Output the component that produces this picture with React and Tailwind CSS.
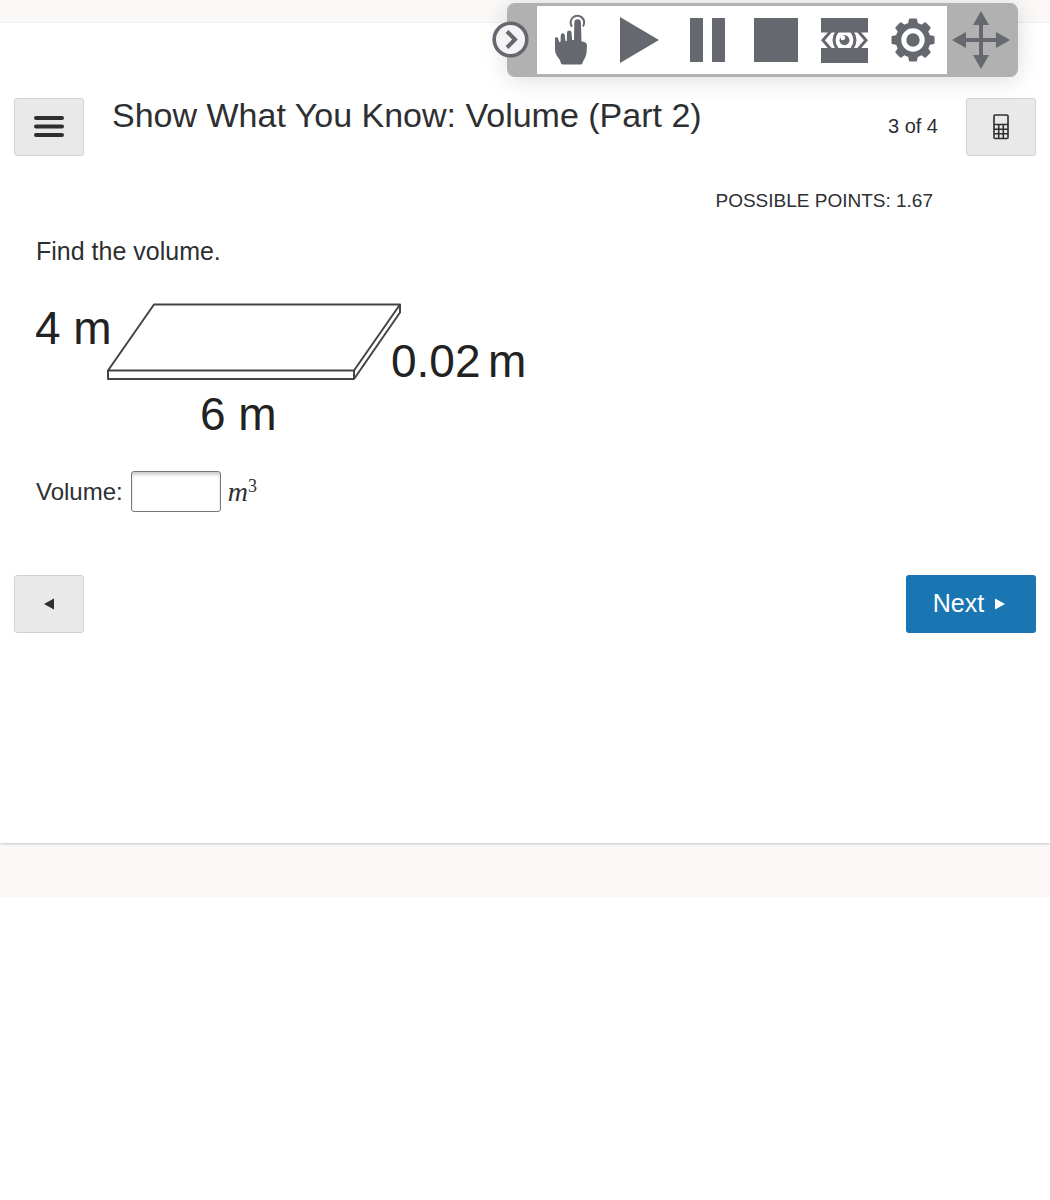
import { useState } from "react";

const grayBtn =
  "flex h-[58px] w-[70px] shrink-0 items-center justify-center rounded-[3px] border border-[#d2d2d2] bg-[#e9e9e9] text-[#2d2f31]";

const GEAR_ANGLES = [0, 45, 90, 135, 180, 225, 270, 315];

const HandIcon = () => (
  <svg width="34" height="52" viewBox="0 0 34 52" fill="currentColor">
    <path d="M6.5 48 C6 44 1 42 1 35 L1 24.5 Q1 23 2.4 23 Q3.8 23 4.3 25 L5.2 28 L6.5 28 L6.8 21 Q6.9 19.3 8.8 19.3 Q10.6 19.3 10.8 21 L11.4 27 L12.8 27 L13 18.5 Q13.1 16.5 15.3 16.5 Q17.3 16.5 17.5 18.5 L18.1 26 L20 26 L20.3 8.5 Q20.4 5.3 23.6 5.3 Q26.8 5.3 26.9 8.5 L27.5 27.5 Q32.5 27.5 33 31.5 L32.6 38 C32 44 29.5 45.5 28.5 49 Q28.2 50.5 26.5 50.5 L8.7 50.5 Q7 50.5 6.5 48 Z" />
    <path
      d="M18 12.7 A6.8 6.8 0 1 1 29 12.4"
      fill="none"
      stroke="currentColor"
      strokeWidth="2"
    />
  </svg>
);

const PlayIcon = () => (
  <svg width="40" height="48" viewBox="0 0 40 48" fill="currentColor">
    <path d="M1 1 L40 24 L1 47 Z" />
  </svg>
);

const PauseIcon = () => (
  <svg width="36" height="44" viewBox="0 0 36 44" fill="currentColor">
    <rect x="0" y="0" width="13" height="44" />
    <rect x="22" y="0" width="13" height="44" />
  </svg>
);

const StopIcon = () => (
  <svg width="44" height="44" viewBox="0 0 44 44" fill="currentColor">
    <rect width="44" height="44" />
  </svg>
);

const EyeIcon = () => (
  <svg width="47" height="45" viewBox="0 0 47 45" fill="currentColor">
    <rect width="47" height="14.5" />
    <rect y="30" width="47" height="15" />
    <path
      d="M10 13 L2 22.2 L10 31.4 M37 13 L45 22.2 L37 31.4"
      fill="none"
      stroke="currentColor"
      strokeWidth="3"
    />
    <path
      d="M16.5 13 Q9.5 22.2 16.5 31.4 M30.5 13 Q37.5 22.2 30.5 31.4"
      fill="none"
      stroke="currentColor"
      strokeWidth="3"
    />
    <circle cx="23.5" cy="22.2" r="5" />
    <circle cx="21.8" cy="19.8" r="2.4" fill="white" />
  </svg>
);

const GearIcon = () => (
  <svg width="44" height="44" viewBox="-22 -22 44 44" fill="currentColor">
    {GEAR_ANGLES.map((a) => (
      <path
        key={a}
        d="M-5 -16 L-4 -21 Q-3.8 -21.5 -3 -21.5 L3 -21.5 Q3.8 -21.5 4 -21 L5 -16 Z"
        transform={`rotate(${a})`}
      />
    ))}
    <circle r="17.5" />
    <circle r="9.2" stroke="white" strokeWidth="5" />
  </svg>
);

const MoveIcon = () => (
  <svg width="58" height="58" viewBox="-29 -29 58 58" fill="currentColor">
    <path d="M0 -29 L8 -15 L2 -15 L2 -2 L15 -2 L15 -8 L29 0 L15 8 L15 2 L2 2 L2 15 L8 15 L0 29 L-8 15 L-2 15 L-2 2 L-15 2 L-15 8 L-29 0 L-15 -8 L-15 -2 L-2 -2 L-2 -15 L-8 -15 Z" />
  </svg>
);

const tools = [
  { label: "Point to read", Icon: HandIcon },
  { label: "Play", Icon: PlayIcon },
  { label: "Pause", Icon: PauseIcon },
  { label: "Stop", Icon: StopIcon },
  { label: "Screen mask", Icon: EyeIcon },
  { label: "Settings", Icon: GearIcon },
];

const ReaderToolbar = () => (
  <div className="absolute top-[3px] right-8 z-10 flex h-[74px] rounded-lg border-[3px] border-[#b1b1b1] bg-[#b1b1b1] text-[#65686f] shadow-[0_2px_24px_rgba(0,0,0,0.14)]">
    <button aria-label="Collapse toolbar" className="relative w-[27px]">
      <svg
        className="absolute top-[15px] -left-[18px]"
        width="37"
        height="37"
        viewBox="0 0 37 37"
        fill="none"
        stroke="currentColor"
      >
        <circle cx="18.5" cy="18.5" r="16.3" fill="#f4f4f4" strokeWidth="3.6" />
        <path d="M15 10.5 L23 18.5 L15 26.5" strokeWidth="4" />
      </svg>
    </button>
    <div className="flex w-[410px] bg-white">
      {tools.map(({ label, Icon }) => (
        <button
          key={label}
          aria-label={label}
          className="flex flex-1 items-center justify-center"
        >
          <Icon />
        </button>
      ))}
    </div>
    <button
      aria-label="Move toolbar"
      className="flex w-[68px] cursor-move items-center justify-center"
    >
      <MoveIcon />
    </button>
  </div>
);

const PrismFigure = () => (
  <svg
    className="mt-6 block max-w-full"
    width="500"
    height="150"
    viewBox="36 290 500 150"
    role="img"
    aria-label="Rectangular prism, 6 m by 4 m by 0.02 m"
  >
    <g fill="none" stroke="#444" strokeWidth="2" strokeLinejoin="round">
      <path d="M154 304.5 H400 L354 370.5 H108 Z" />
      <path d="M108 370.5 V379 H354 V370.5 M354 379 L400 312.5 V304.5" />
    </g>
    <g
      fill="#222"
      fontSize="46"
      fontFamily='"Liberation Sans", Arial, sans-serif'
    >
      <text x="35" y="344">
        4 m
      </text>
      <text x="391" y="377">
        0.02
      </text>
      <text x="488" y="377">
        m
      </text>
      <text x="200" y="430">
        6 m
      </text>
    </g>
  </svg>
);

const App = () => {
  const [volume, setVolume] = useState("");

  return (
    <div className="relative min-h-screen bg-white font-['Liberation_Sans',Arial,sans-serif] text-[#2d2f31]">
      <ReaderToolbar />

      <div className="bg-[#faf9f7] pt-[23px] pb-[54px]">
        <main className="bg-white px-[14px] pt-[75px] pb-[210px] shadow-[0_1px_3px_rgba(0,0,0,0.2)]">
          <header className="flex items-start">
            <button aria-label="Menu" className={grayBtn}>
              <svg
                width="30"
                height="22"
                viewBox="0 0 30 22"
                stroke="currentColor"
                strokeWidth="4"
                strokeLinecap="round"
              >
                <path d="M2 2 H28 M2 10.5 H28 M2 19 H28" />
              </svg>
            </button>
            <h1 className="ml-7 flex-1 text-[34px] leading-[34px]">
              Show What You Know: Volume (Part 2)
            </h1>
            <span className="mr-7 text-xl leading-[56px]">3 of 4</span>
            <button aria-label="Calculator" className={grayBtn}>
              <svg
                width="16"
                height="26"
                viewBox="0 0 16 26"
                fill="none"
                stroke="currentColor"
                strokeWidth="1.6"
              >
                <rect x="1" y="1" width="14" height="23.5" rx="1" />
                <path d="M1 10.5 H15 M1 15.2 H15 M1 19.8 H15 M5.7 10.5 V24.5 M10.3 10.5 V24.5" />
              </svg>
            </button>
          </header>

          <section className="px-[22px] pt-[30px]">
            <p className="pr-[81px] text-right text-[19px] leading-[30px]">
              POSSIBLE POINTS: 1.67
            </p>
            <p className="mt-5 text-[25px] leading-[30px]">Find the volume.</p>
            <PrismFigure />
            <div className="mt-[31px] flex items-center text-2xl">
              <label htmlFor="volume">Volume:</label>
              <input
                id="volume"
                type="text"
                value={volume}
                onChange={(e) => setVolume(e.target.value)}
                className="ml-2 h-[41px] w-[90px] rounded-[3px] border border-[#777] bg-white px-2 shadow-[inset_0_3px_3px_rgba(0,0,0,0.18)]"
              />
              <span className="ml-[7px] font-['Liberation_Serif',serif] text-[28px] leading-[41px] italic">
                m<sup className="text-lg not-italic">3</sup>
              </span>
            </div>
          </section>

          <nav className="mt-[63px] flex justify-between">
            <button aria-label="Previous" className={grayBtn}>
              <svg width="10" height="12" viewBox="0 0 10 12" fill="currentColor">
                <path d="M10 0.5 V11.5 L0 6 Z" />
              </svg>
            </button>
            <button className="flex h-[58px] w-[130px] items-center justify-center gap-[11px] rounded-[3px] bg-[#1976b3] pr-1 text-[25px] text-white">
              Next
              <svg width="10" height="12" viewBox="0 0 10 12" fill="currentColor">
                <path d="M0 0.5 V11.5 L10 6 Z" />
              </svg>
            </button>
          </nav>
        </main>
      </div>
    </div>
  );
};

export default App;
